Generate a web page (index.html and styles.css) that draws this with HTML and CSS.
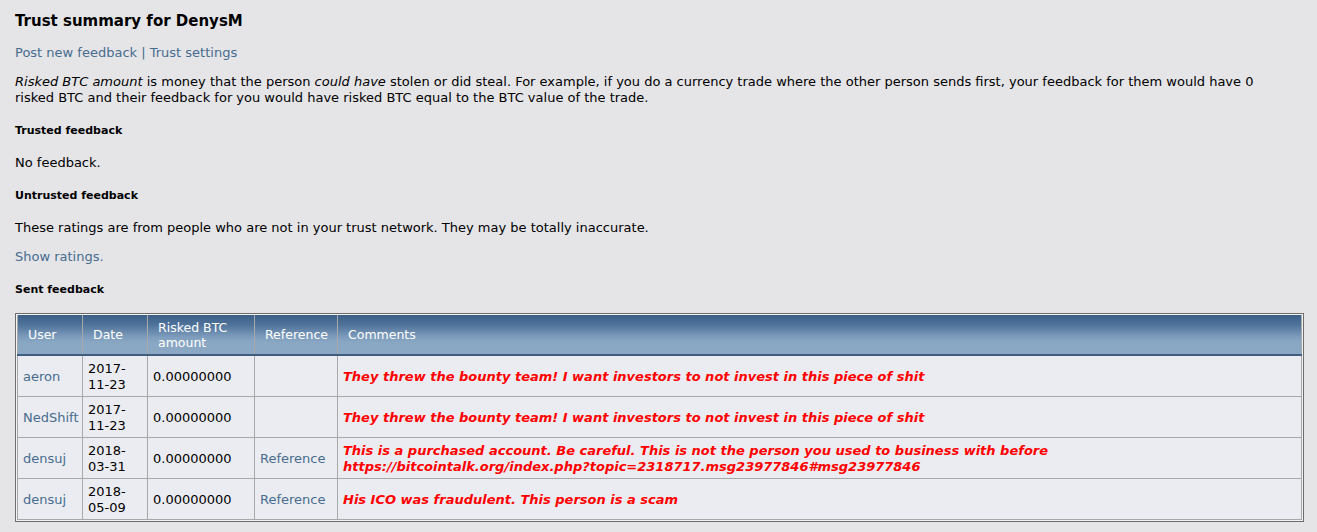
FILE: index.html
```html
<!DOCTYPE html>
<html>
<head>
<meta charset="utf-8">
<link rel="stylesheet" href="styles.css">
</head>
<body>
<div class="page">
  <h2 class="title">Trust summary for DenysM</h2>
  <div class="links"><a href="#">Post new feedback</a> | <a href="#">Trust settings</a></div>
  <p class="intro"><i>Risked BTC amount</i> is money that the person <i>could have</i> stolen or did steal. For example, if you do a currency trade where the other person sends first, your feedback for them would have 0 risked BTC and their feedback for you would have risked BTC equal to the BTC value of the trade.</p>
  <h4 class="sub sub-first">Trusted feedback</h4>
  <p class="text">No feedback.</p>
  <h4 class="sub">Untrusted feedback</h4>
  <p class="text">These ratings are from people who are not in your trust network. They may be totally inaccurate.</p>
  <p class="text text-tight"><a href="#">Show ratings.</a></p>
  <h4 class="sub">Sent feedback</h4>
  <div class="tablewrap">
    <table class="fb">
      <colgroup>
        <col class="c-user"><col class="c-date"><col class="c-risk"><col class="c-ref"><col class="c-com">
      </colgroup>
      <thead>
        <tr><th>User</th><th>Date</th><th>Risked BTC amount</th><th>Reference</th><th>Comments</th></tr>
      </thead>
      <tbody>
        <tr><td><a href="#">aeron</a></td><td>2017-<br>11-23</td><td>0.00000000</td><td></td><td class="com">They threw the bounty team! I want investors to not invest in this piece of shit</td></tr>
        <tr><td><a href="#">NedShift</a></td><td>2017-<br>11-23</td><td>0.00000000</td><td></td><td class="com">They threw the bounty team! I want investors to not invest in this piece of shit</td></tr>
        <tr><td><a href="#">densuj</a></td><td>2018-<br>03-31</td><td>0.00000000</td><td><a href="#">Reference</a></td><td class="com">This is a purchased account. Be careful. This is not the person you used to business with before https://bitcointalk.org/index.php?topic=2318717.msg23977846#msg23977846</td></tr>
        <tr><td><a href="#">densuj</a></td><td>2018-<br>05-09</td><td>0.00000000</td><td><a href="#">Reference</a></td><td class="com">His ICO was fraudulent. This person is a scam</td></tr>
      </tbody>
    </table>
  </div>
</div>
</body>
</html>
```
FILE: styles.css
```css
html, body {
  margin: 0;
  padding: 0;
  background: #e5e5e8;
}
body {
  font-family: Verdana, "DejaVu Sans", sans-serif;
  font-size: 13px;
  color: #000;
}
a {
  color: #476c8e;
  text-decoration: none;
}
.page {
  padding: 0 13px 0 15px;
}
.title {
  font-size: 15px;
  line-height: 18px;
  font-weight: bold;
  margin: 0;
  padding-top: 12px;
}
.links {
  line-height: 16px;
  margin-top: 15px;
  color: #476c8e;
}
.intro {
  margin: 13px 0 0;
  line-height: 16px;
  max-width: 1262px;
}
.sub {
  font-size: 11px;
  line-height: 14px;
  font-weight: bold;
  margin: 18px 0 0;
}
.text {
  margin: 17px 0 0;
  line-height: 16px;
}
.text-tight {
  margin-top: 13px;
}
.tablewrap {
  margin-top: 16px;
  border: 1px solid #6d6d6d;
  padding: 1px;
  background: #f2f2f4;
}
.fb {
  width: 100%;
  border-collapse: collapse;
  table-layout: fixed;
  background: #ebecf1;
}
.c-user { width: 65px; }
.c-date { width: 65px; }
.c-risk { width: 107px; }
.c-ref { width: 83px; }
.fb th {
  height: 40px;
  box-sizing: border-box;
  padding: 0 10px;
  text-align: left;
  font-weight: normal;
  font-size: 12.5px;
  line-height: 15px;
  color: #fff;
  background: linear-gradient(to bottom, #3b5f86 0%, #4f7299 25%, #7c9bbb 55%, #89a7c3 70%, #8aa8c3 100%);
  border-left: 1px solid #a8a8a8;
  border-right: 1px solid #a8a8a8;
  border-bottom: 2px solid #3f5d80;
}
.fb td {
  height: 41px;
  box-sizing: border-box;
  padding: 3px 5px 0;
  border: 1px solid #a8a8a8;
  line-height: 16px;
  vertical-align: middle;
}
.fb td.com {
  color: #ff0000;
  font-weight: bold;
  font-style: italic;
}
```
